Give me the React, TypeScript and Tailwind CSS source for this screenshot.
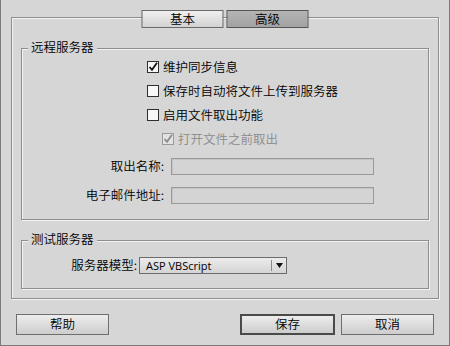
import React from 'react';

const font = { fontFamily: '"Noto Sans CJK SC", "Liberation Sans", sans-serif' };

export default function App() {
  return (
    <div
      style={font}
      className="relative flex h-[346px] w-[450px] flex-col overflow-hidden border-x border-b border-[#7a7a7a] bg-[#d6d6d6] text-[12.5px] font-[350] leading-none text-black"
    >
      {/* outer tab panel */}
      <div className="relative ml-[10px] mr-[10px] mt-[17px] h-[282px] border border-[#8e8e8e] px-[9px] pt-[30px] shadow-[inset_1px_1px_0_#f2f2f2,1px_1px_0_#f2f2f2]">
        <div className="absolute left-1/2 top-[-8px] flex -translate-x-1/2 gap-[3px]">
          <TabButton label="基本" />
          <TabButton label="高级" active />
        </div>

        <Group title="远程服务器" className="h-[172px] pt-[6px]">
          <CheckRow label="维护同步信息" checked indent="pl-[125px]" />
          <CheckRow label="保存时自动将文件上传到服务器" indent="pl-[125px]" />
          <CheckRow label="启用文件取出功能" indent="pl-[125px]" />
          <CheckRow label="打开文件之前取出" checked disabled indent="pl-[140px]" />
          <FieldRow label="取出名称:" className="h-[30px]" />
          <FieldRow label="电子邮件地址:" className="h-[29px]" />
        </Group>

        <Group title="测试服务器" className="mt-[20px] h-[49px] pt-[8px]">
          <div className="flex h-[32px] items-center">
            <span className="w-[117px] pr-[2px] text-right">服务器模型:</span>
            <div className="flex h-[17px] w-[148px] items-center border border-[#6c6c6c] bg-gradient-to-b from-[#ececec] to-[#d4d4d4]">
              <span className="flex-1 pl-[6px] text-[11px] font-normal" style={{ fontFamily: '"Open Sans", sans-serif' }}>
                ASP VBScript
              </span>
              <span className="h-[11px] w-px bg-[#8a8a8a]" />
              <span className="flex w-[14px] justify-center">
                <svg width="7" height="5" viewBox="0 0 7 5">
                  <path d="M0 0h7L3.5 5z" fill="#111" />
                </svg>
              </span>
            </div>
          </div>
        </Group>
      </div>

      {/* bottom buttons */}
      <div className="mt-[15px] flex px-[15px]">
        <DlgButton label="帮助" className="w-[93px]" />
        <div className="flex-1" />
        <DlgButton label="保存" className="w-[95px]" primary />
        <DlgButton label="取消" className="ml-[6px] w-[93px]" />
      </div>
    </div>
  );
}

function TabButton({ label, active = false }: { label: string; active?: boolean }) {
  return (
    <div
      className={`flex h-[18px] w-[82px] items-center justify-center border ${
        active
          ? 'border-[#555] bg-gradient-to-b from-[#b4b4b4] to-[#a2a2a2]'
          : 'border-[#6a6a6a] bg-gradient-to-b from-[#f0f0f0] to-[#d2d2d2]'
      }`}
    >
      {label}
    </div>
  );
}

function Group({ title, className = '', children }: { title: string; className?: string; children: React.ReactNode }) {
  return (
    <div className={`relative border border-[#8e8e8e] shadow-[inset_1px_1px_0_#f2f2f2,1px_1px_0_#f2f2f2] ${className}`}>
      <span className="absolute left-[6px] top-[-8px] bg-[#d6d6d6] px-[3px]">{title}</span>
      {children}
    </div>
  );
}

function CheckRow({ label, checked = false, disabled = false, indent }: { label: string; checked?: boolean; disabled?: boolean; indent: string }) {
  return (
    <div className={`flex h-[24px] items-center ${indent} ${disabled ? 'text-[#8a8a8a]' : ''}`}>
      <span
        className={`flex h-[12px] w-[12px] items-center justify-center border ${
          disabled ? 'border-[#9a9a9a] bg-[#e2e2e2]' : 'border-[#2e2e2e] bg-[#f7f7f7]'
        }`}
      >
        {checked && (
          <svg width="10" height="10" viewBox="0 0 10 10">
            <path d="M1.5 5 L4 7.8 L9 0.8" fill="none" stroke={disabled ? '#8a8a8a' : '#111'} strokeWidth="1.8" />
          </svg>
        )}
      </span>
      <span className="ml-[4px]">{label}</span>
    </div>
  );
}

function FieldRow({ label, className }: { label: string; className: string }) {
  return (
    <div className={`flex items-center ${className}`}>
      <span className="w-[142px] text-right">{label}</span>
      <div className="ml-[7px] h-[17px] w-[203px] border border-[#9a9a9a] bg-[#d4d4d4] shadow-[inset_1px_1px_0_#c4c4c4]" />
    </div>
  );
}

function DlgButton({ label, className = '', primary = false }: { label: string; className?: string; primary?: boolean }) {
  return (
    <button
      type="button"
      className={`flex h-[21px] items-center justify-center bg-gradient-to-b from-[#ededed] to-[#cdcdcd] font-[350] ${
        primary ? 'border-2 border-[#4a4a4a]' : 'border border-[#6e6e6e]'
      } ${className}`}
    >
      {label}
    </button>
  );
}
